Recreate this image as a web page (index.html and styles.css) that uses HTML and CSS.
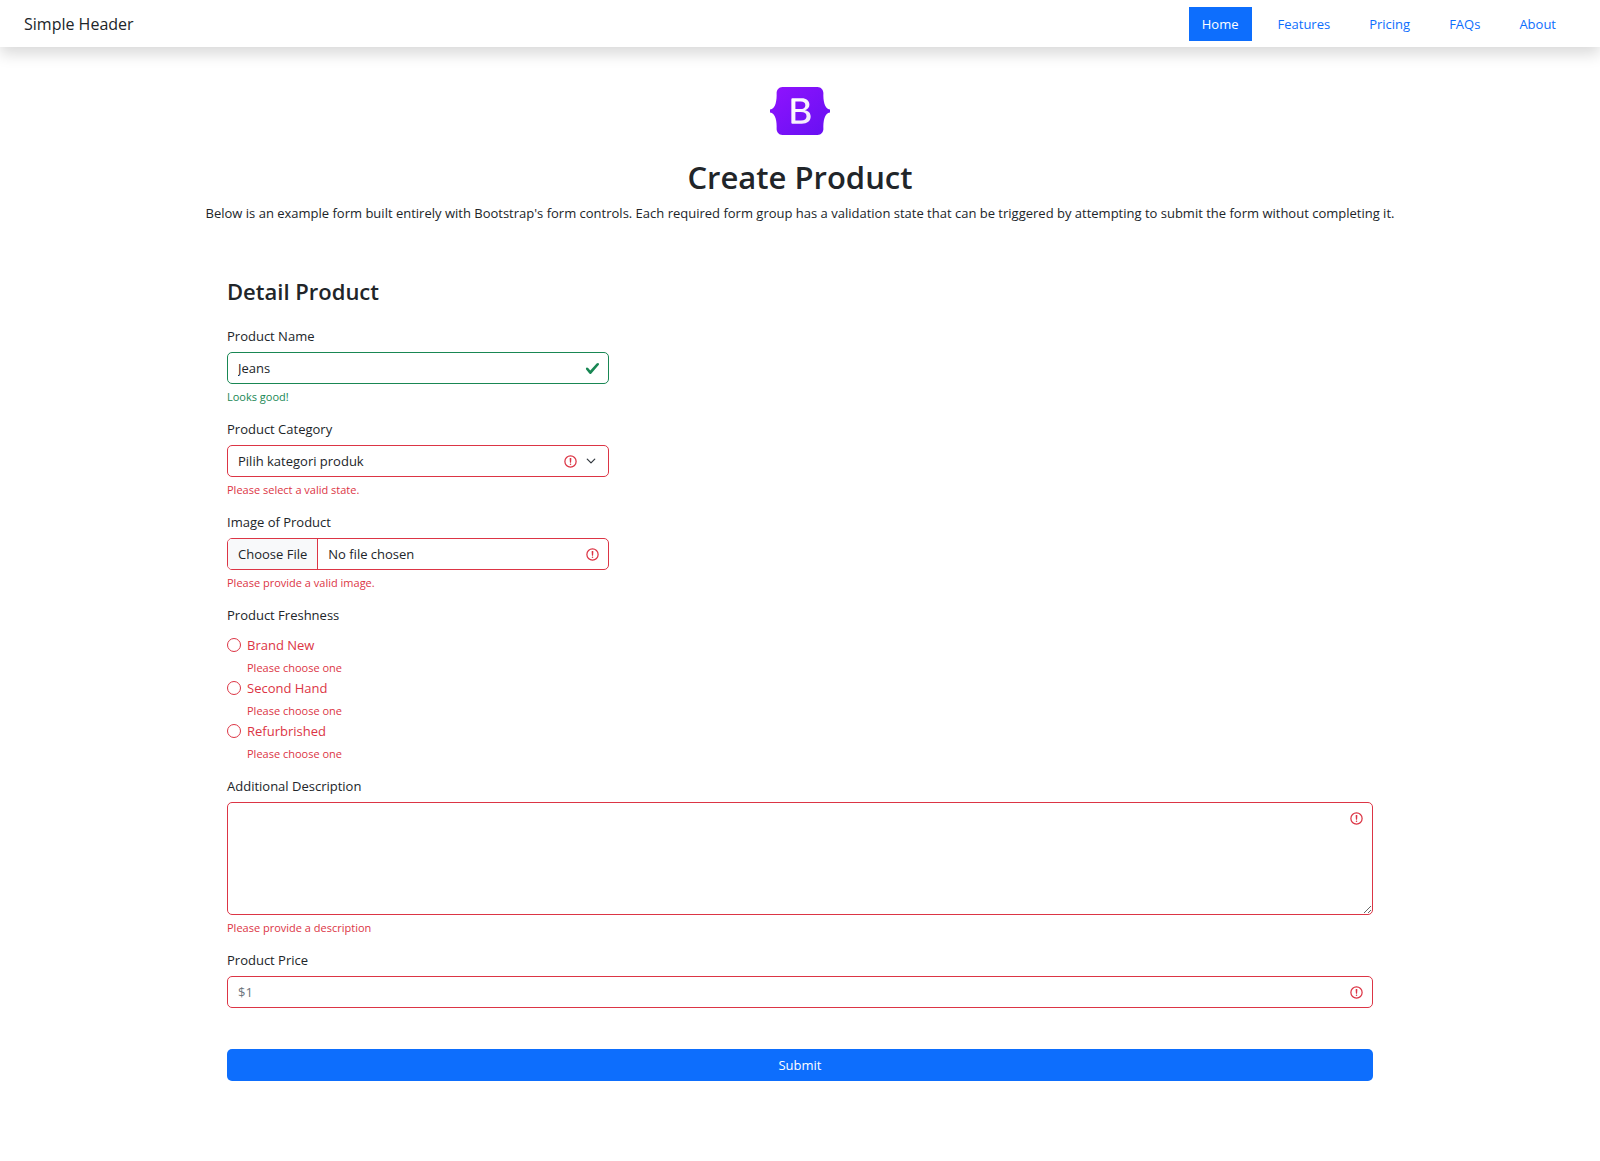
FILE: index.html
```html
<!DOCTYPE html>
<html lang="en">
<head>
<meta charset="utf-8">
<meta name="viewport" content="width=device-width, initial-scale=1">
<title>Create Product</title>
<link rel="stylesheet" href="styles.css">
</head>
<body>
<header class="site-header">
  <a class="brand" href="#">Simple Header</a>
  <nav>
    <ul class="nav">
      <li><a class="nav-link active" href="#" aria-current="page">Home</a></li>
      <li><a class="nav-link" href="#">Features</a></li>
      <li><a class="nav-link" href="#">Pricing</a></li>
      <li><a class="nav-link" href="#">FAQs</a></li>
      <li><a class="nav-link" href="#">About</a></li>
    </ul>
  </nav>
</header>
<main>
  <section class="intro">
    <svg class="logo" viewBox="0 0 118 94" role="img" aria-label="Bootstrap">
      <defs>
        <linearGradient id="logo-fill" x1="0" y1="0" x2="1" y2="1">
          <stop offset="0" stop-color="#9013fe"/>
          <stop offset="1" stop-color="#6610f2"/>
        </linearGradient>
        <linearGradient id="letter-fill" x1="0" y1="0" x2="1" y2="1">
          <stop offset="0" stop-color="#fff"/>
          <stop offset="1" stop-color="#f1e5fc"/>
        </linearGradient>
      </defs>
      <path fill="url(#logo-fill)" d="M24.509 0c-6.733 0-11.715 5.893-11.492 12.284.214 6.14-.064 14.092-2.066 20.577C8.943 39.365 5.547 43.485 0 44.014v5.972c5.547.529 8.943 4.649 10.951 11.153 2.002 6.485 2.28 14.437 2.066 20.577C12.794 88.106 17.776 94 24.51 94H93.5c6.733 0 11.714-5.893 11.491-12.284-.214-6.14.064-14.092 2.066-20.577 2.009-6.504 5.396-10.624 10.943-11.153v-5.972c-5.547-.529-8.934-4.649-10.943-11.153-2.002-6.484-2.28-14.437-2.066-20.577C105.214 5.894 100.233 0 93.5 0H24.508z"/>
      <path fill="url(#letter-fill)" fill-rule="evenodd" d="M80 57.863C80 66.663 73.436 72 62.543 72H44a2 2 0 01-2-2V24a2 2 0 012-2h18.437c9.083 0 15.044 4.92 15.044 12.474 0 5.302-4.01 10.049-9.119 10.88v.277C75.317 46.394 80 51.21 80 57.863zM60.521 28.34H49.948v14.934h8.905c6.884 0 10.68-2.772 10.68-7.727 0-4.643-3.264-7.207-9.012-7.207zM49.948 49.2v16.458H60.91c7.167 0 10.964-2.876 10.964-8.281 0-5.406-3.903-8.178-11.425-8.178H49.948z"/>
    </svg>
    <h1>Create Product</h1>
    <p>Below is an example form built entirely with Bootstrap's form controls. Each required form group has a validation state that can be triggered by attempting to submit the form without completing it.</p>
  </section>
  <form class="product-form" novalidate>
    <h2>Detail Product</h2>
    <div class="field narrow">
      <label for="name">Product Name</label>
      <input class="control valid" id="name" type="text" value="Jeans">
      <p class="feedback good">Looks good!</p>
    </div>
    <div class="field narrow">
      <label for="category">Product Category</label>
      <select class="control select invalid" id="category">
        <option>Pilih kategori produk</option>
      </select>
      <p class="feedback">Please select a valid state.</p>
    </div>
    <div class="field narrow">
      <label for="image">Image of Product</label>
      <input class="control file invalid" id="image" type="file">
      <p class="feedback">Please provide a valid image.</p>
    </div>
    <fieldset class="field">
      <legend>Product Freshness</legend>
      <div class="choices">
        <div class="choice">
          <input type="radio" name="freshness" id="brand-new">
          <label for="brand-new">Brand New</label>
          <p class="feedback">Please choose one</p>
        </div>
        <div class="choice">
          <input type="radio" name="freshness" id="second-hand">
          <label for="second-hand">Second Hand</label>
          <p class="feedback">Please choose one</p>
        </div>
        <div class="choice">
          <input type="radio" name="freshness" id="refurbished">
          <label for="refurbished">Refurbrished</label>
          <p class="feedback">Please choose one</p>
        </div>
      </div>
    </fieldset>
    <div class="field">
      <label for="description">Additional Description</label>
      <textarea class="control area invalid" id="description"></textarea>
      <p class="feedback">Please provide a description</p>
    </div>
    <div class="field">
      <label for="price">Product Price</label>
      <input class="control invalid" id="price" type="text" placeholder="$1">
    </div>
    <button class="submit" type="submit">Submit</button>
  </form>
</main>
</body>
</html>
```

FILE: styles.css
```css
*,
*::before,
*::after {
  box-sizing: border-box;
}

body {
  margin: 0;
  font-family: "Open Sans", "Noto Sans", sans-serif;
  font-size: 13px;
  line-height: 20px;
  color: #212529;
  background: #fff;
}

h1,
h2,
p,
ul {
  margin: 0;
  padding: 0;
}

.site-header {
  display: flex;
  align-items: center;
  justify-content: space-between;
  padding: 7px 31px 6px 24px;
  box-shadow: 0 7px 14px rgba(0, 0, 0, 0.15);
}

.brand {
  font-size: 16px;
  color: #212529;
  text-decoration: none;
}

.nav {
  display: flex;
  gap: 13px;
  list-style: none;
}

.nav-link {
  display: block;
  padding: 7px 13px;
  color: #0d6efd;
  text-decoration: none;
}

.nav-link.active {
  color: #fff;
  background: #0d6efd;
}

.intro {
  display: flex;
  flex-direction: column;
  align-items: center;
  padding: 40px 24px;
  text-align: center;
}

.logo {
  width: 60px;
  height: 48px;
}

h1 {
  margin-top: 20px;
  font-size: 31px;
  font-weight: 600;
  line-height: 44px;
}

.intro p {
  margin-top: 4px;
}

.product-form {
  max-width: 1146px;
  margin: 0 auto;
  padding: 12px 0 78px;
}

h2 {
  margin-bottom: 19px;
  font-size: 22px;
  font-weight: 600;
  line-height: 32px;
}

.field {
  display: flex;
  flex-direction: column;
  min-width: 0;
  margin: 0 0 13px;
  padding: 0;
  border: 0;
}

.narrow {
  width: 33.333%;
}

legend {
  padding: 0;
}

.control {
  width: 100%;
  height: 32px;
  margin: 6px 0 0;
  padding: 5px 10px;
  border: 1px solid #dc3545;
  border-radius: 5px;
  font: inherit;
  color: #212529;
  background-color: #fff;
  background-repeat: no-repeat;
  background-position: right 8px center;
  background-size: 15px 15px;
}

.control::placeholder {
  color: #6c757d;
  opacity: 1;
}

.valid {
  border-color: #198754;
  background-image: url("data:image/svg+xml,%3Csvg xmlns='http://www.w3.org/2000/svg' viewBox='0 0 8 8'%3E%3Cpath fill='%23198754' d='M2.3 6.73.6 4.53c-.4-1.04.46-1.4 1.1-.8l1.1 1.4 3.4-3.8c.6-.63 1.6-.27 1.2.7l-4 4.6c-.43.5-.8.4-1.1.1z'/%3E%3C/svg%3E");
}

.invalid {
  background-image: url("data:image/svg+xml,%3Csvg xmlns='http://www.w3.org/2000/svg' viewBox='0 0 12 12' fill='none' stroke='%23dc3545'%3E%3Ccircle cx='6' cy='6' r='4.5'/%3E%3Cpath stroke-linejoin='round' d='M5.8 3.6h.4L6 6.5z'/%3E%3Ccircle cx='6' cy='8.2' r='.6' fill='%23dc3545' stroke='none'/%3E%3C/svg%3E");
}

.select {
  appearance: none;
  background-image:
    url("data:image/svg+xml,%3Csvg xmlns='http://www.w3.org/2000/svg' viewBox='0 0 16 16'%3E%3Cpath fill='none' stroke='%23343a40' stroke-linecap='round' stroke-linejoin='round' stroke-width='2' d='m2 5 6 6 6-6'/%3E%3C/svg%3E"),
    url("data:image/svg+xml,%3Csvg xmlns='http://www.w3.org/2000/svg' viewBox='0 0 12 12' fill='none' stroke='%23dc3545'%3E%3Ccircle cx='6' cy='6' r='4.5'/%3E%3Cpath stroke-linejoin='round' d='M5.8 3.6h.4L6 6.5z'/%3E%3Ccircle cx='6' cy='8.2' r='.6' fill='%23dc3545' stroke='none'/%3E%3C/svg%3E");
  background-position: right 12px center, right 30px center;
  background-size: 10px 10px, 15px 15px;
}

.file {
  overflow: hidden;
}

.file::file-selector-button {
  height: 30px;
  margin: -5px 10px -5px -10px;
  padding: 5px 10px;
  border: 0;
  border-right: 1px solid #dc3545;
  border-radius: 0;
  font: inherit;
  color: #212529;
  background: #f8f9fa;
}

.area {
  height: 113px;
  background-position: right 8px top 8px;
  resize: vertical;
}

.feedback {
  margin-top: 4px;
  font-size: 11px;
  line-height: 18px;
  color: #dc3545;
}

.good {
  color: #198754;
}

.choices {
  display: grid;
  gap: 1px;
  margin-top: 10px;
}

.choice {
  display: grid;
  grid-template-columns: 14px 1fr;
  column-gap: 6px;
  align-items: center;
  color: #dc3545;
}

.choice input {
  appearance: none;
  width: 14px;
  height: 14px;
  margin: 0;
  border: 1px solid #dc3545;
  border-radius: 50%;
}

.choice input:checked {
  border-width: 4px;
}

.choice .feedback {
  grid-column: 2;
}

.submit {
  width: 100%;
  height: 32px;
  margin-top: 28px;
  border: 0;
  border-radius: 5px;
  font: inherit;
  color: #fff;
  background: #0d6efd;
}
```
